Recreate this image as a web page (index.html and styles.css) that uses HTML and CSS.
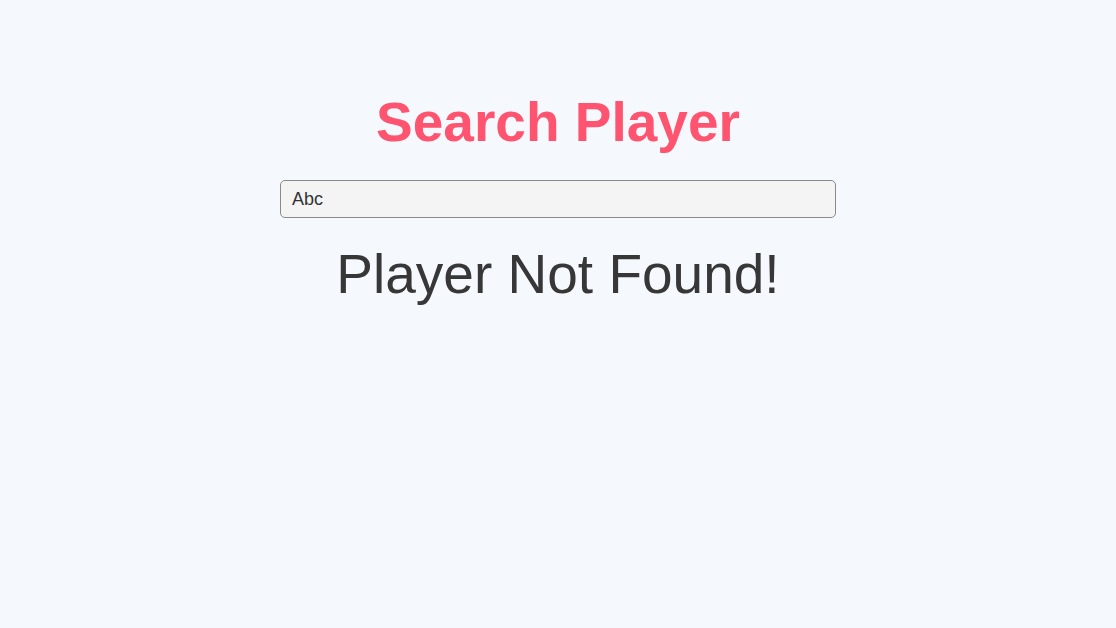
FILE: index.html
```html
<!DOCTYPE html>
<html lang="en">
<head>
<meta charset="utf-8">
<title>Search Player</title>
<link rel="stylesheet" href="styles.css">
</head>
<body>
<main class="page">
  <h1 class="title">Search Player</h1>
  <input class="search" id="search" type="text" value="Abc" autofocus>
  <p class="message">Player Not Found!</p>
</main>
<script src="script.js"></script>
</body>
</html>
```
FILE: styles.css
```css
html, body {
  margin: 0;
  padding: 0;
  background: #f5f9fe;
  font-family: "Liberation Sans", Arial, sans-serif;
}
.page {
  display: flex;
  flex-direction: column;
  align-items: center;
  padding-top: 90px;
}
.title {
  margin: 0;
  font-size: 55px;
  line-height: 64px;
  font-weight: bold;
  color: #fe5470;
}
.search {
  box-sizing: border-box;
  margin-top: 26px;
  width: 556px;
  height: 38px;
  padding: 0 11px;
  border: 1px solid #8a8a8a;
  border-radius: 5px;
  background: #f4f4f4;
  font-family: "Liberation Sans", Arial, sans-serif;
  font-size: 18px;
  color: #333;
  outline: none;
  caret-color: #222;
}
.message {
  margin: 24px 0 0;
  font-size: 55px;
  line-height: 64px;
  color: #373737;
}
```
FILE: script.js
```js
var input = document.getElementById('search');
input.focus();
input.setSelectionRange(3, 3);
```
